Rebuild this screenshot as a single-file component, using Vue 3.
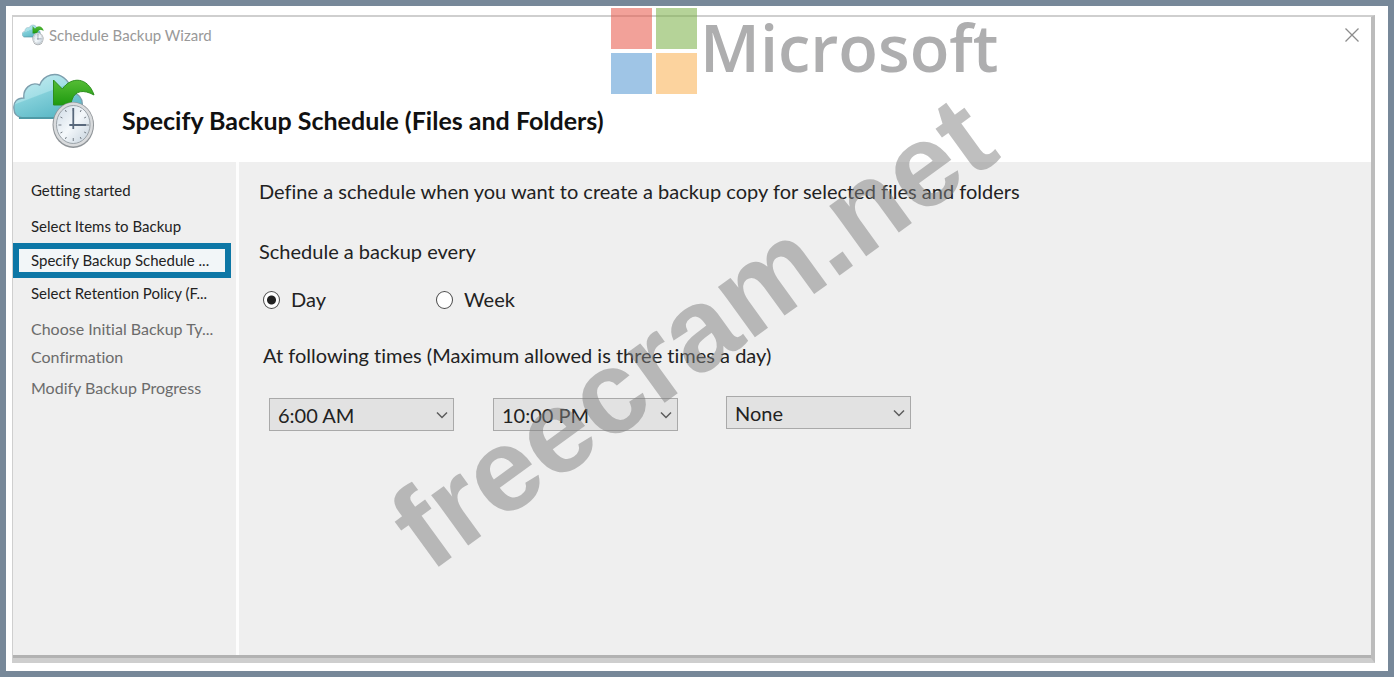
<script setup>
import { ref } from 'vue'

const steps = [
  { label: 'Getting started', state: 'done' },
  { label: 'Select Items to Backup', state: 'done' },
  { label: 'Specify Backup Schedule ...', state: 'current' },
  { label: 'Select Retention Policy (F...', state: 'done' },
  { label: 'Choose Initial Backup Ty...', state: 'pending' },
  { label: 'Confirmation', state: 'pending' },
  { label: 'Modify Backup Progress', state: 'pending' },
]

const frequency = ref('Day')
const options = ['None', '6:00 AM', '10:00 PM']
const times = ref(['6:00 AM', '10:00 PM', 'None'])
</script>

<template>
  <div class="page">
    <svg class="defs" width="0" height="0" aria-hidden="true">
      <defs>
        <linearGradient id="cloudFill" x1="0" y1="0" x2="0.6" y2="1">
          <stop offset="0" stop-color="#c9edf2" />
          <stop offset="0.5" stop-color="#a3dfe6" />
          <stop offset="0.52" stop-color="#82cfd9" />
          <stop offset="1" stop-color="#5bb8c6" />
        </linearGradient>
        <linearGradient id="arrowFill" x1="0" y1="0" x2="0" y2="1">
          <stop offset="0" stop-color="#55bd35" />
          <stop offset="1" stop-color="#1f9a10" />
        </linearGradient>
        <linearGradient id="dialFill" x1="0" y1="0" x2="1" y2="1">
          <stop offset="0" stop-color="#cfdbe6" />
          <stop offset="0.5" stop-color="#f4f8fb" />
          <stop offset="1" stop-color="#c3d0db" />
        </linearGradient>
        <symbol id="backupIcon" viewBox="0 0 84 80" preserveAspectRatio="none">
          <path d="M10 47C4 46 1 43 1 38C0 31 4 27 11 27C10 18 18 10 27 14C31 4 44 -1 54 9C58 13 58 18 58 21C66 22 71 27 70 35C70 43 64 47 58 47Z" fill="url(#cloudFill)" stroke="#7d9fae" stroke-width="1.4" />
          <path d="M6 47H58" stroke="#4f9aa6" stroke-width="2" />
          <path d="M41 9L50 18C59 5 76 6 82 24C71 18 63 20 60 28L58 34H41Z" fill="url(#arrowFill)" stroke="#2b8d1c" stroke-width="1" />
          <ellipse cx="61" cy="54" rx="21" ry="23" fill="#8f9498" />
          <ellipse cx="61" cy="53.500" rx="20" ry="22" fill="#d9dbdd" />
          <ellipse cx="61" cy="53.500" rx="17" ry="19" fill="url(#dialFill)" stroke="#9aa2a8" stroke-width="1" />
          <path d="M61 37v3M61 67v3M46 54h3M74 54h3M53 39l1 2M69 39l-1 2M53 68l1-2M69 68l-1-2M48 46l2 1M74 46l-2 1M48 62l2-1M74 62l-2-1" stroke="#777f87" stroke-width="1" />
          <path d="M61 37V58M57 54H74" stroke="#59697c" stroke-width="1.8" fill="none" />
        </symbol>
      </defs>
    </svg>

    <main class="window">
      <header class="head">
        <div class="titlebar">
          <svg class="app-icon" aria-hidden="true"><use href="#backupIcon" /></svg>
          <span class="app-title">Schedule Backup Wizard</span>
          <button class="close" type="button" aria-label="Close">
            <svg viewBox="0 0 14 14" width="14" height="14"><path d="M0.500 0.500L13.500 13.500M13.500 0.500L0.500 13.500" stroke="#8c8c8c" stroke-width="1.300" /></svg>
          </button>
        </div>
        <div class="banner">
          <svg class="banner-icon" aria-hidden="true"><use href="#backupIcon" /></svg>
          <h1>Specify Backup Schedule (Files and Folders)</h1>
        </div>
      </header>

      <div class="body">
        <nav class="sidebar" aria-label="Wizard steps">
          <ol>
            <li v-for="s in steps" :key="s.label" :class="s.state">{{ s.label }}</li>
          </ol>
        </nav>

        <form class="content" @submit.prevent>
          <p class="intro">Define a schedule when you want to create a backup copy for selected files and folders</p>
          <p id="every" class="every">Schedule a backup every</p>
          <div class="radios" role="radiogroup" aria-labelledby="every">
            <label v-for="f in ['Day', 'Week']" :key="f">
              <input v-model="frequency" type="radio" name="frequency" :value="f" />
              <span>{{ f }}</span>
            </label>
          </div>
          <p class="caption">At following times (Maximum allowed is three times a day)</p>
          <div class="times">
            <div v-for="(t, i) in times" :key="i" class="picker">
              <select v-model="times[i]" :aria-label="'Backup time ' + (i + 1)">
                <option v-for="o in options" :key="o">{{ o }}</option>
              </select>
              <svg class="chevron" viewBox="0 0 12 8" aria-hidden="true"><path d="M1 1.500L6 6.500L11 1.500" fill="none" stroke="#5c5c5c" stroke-width="1.500" /></svg>
            </div>
          </div>
        </form>
      </div>
    </main>

    <div class="brand">
      <svg viewBox="0 0 86 86" width="86" height="86" aria-hidden="true">
        <path d="M0 0h41v41H0z" fill="#e8594b" />
        <path d="M45 0h41v41H45z" fill="#7db249" />
        <path d="M0 45h41v41H0z" fill="#5598d4" />
        <path d="M45 45h41v41H45z" fill="#fbb254" />
      </svg>
      <span>Microsoft</span>
    </div>
    <div class="watermark"><span>freecram.net</span></div>
  </div>
</template>

<style>
html,
body,
#app {
  height: 100%;
}
</style>

<style scoped>
* {
  box-sizing: border-box;
}
.page {
  position: relative;
  display: flex;
  min-height: 100%;
  padding: 9px 13px 8px 6px;
  border: 6px solid #778899;
  background: #fff;
  overflow: hidden;
  font-family: Lato, "Open Sans", sans-serif;
  font-variant-ligatures: none;
  color: #222;
}
.defs {
  position: absolute;
}
.window {
  flex: 1;
  display: flex;
  flex-direction: column;
  border-top: 2px solid #cfcfcf;
  border-left: 1px solid #cfcfcf;
  border-right: 4px solid #bcbcbc;
  border-bottom: 5px solid #cecece;
}
.head {
  height: 145px;
  background: #fff;
}
.titlebar {
  display: flex;
  align-items: center;
  height: 36px;
  padding: 0 12px 0 9px;
}
.app-icon {
  width: 22px;
  height: 22px;
}
.app-title {
  margin-left: 5px;
  font-size: 15px;
  color: #999;
}
.close {
  display: grid;
  margin-left: auto;
  padding: 0;
  border: 0;
  background: none;
}
.banner {
  display: flex;
  align-items: center;
  height: 84px;
  margin-top: 16px;
}
.banner-icon {
  width: 83px;
  height: 80px;
}
h1 {
  margin: 18px 0 0 26px;
  font-size: 25px;
  line-height: 32px;
  font-weight: 700;
  color: #111;
}
.body {
  flex: 1;
  display: flex;
  border-bottom: 3px solid #b2b2b2;
  background: #efefef;
}
.sidebar {
  width: 226px;
  border-right: 3px solid #fdfdfd;
}
ol {
  margin: 0;
  padding: 16px 5px 0 0;
  list-style: none;
  font-size: 15px;
  line-height: 24px;
}
li {
  padding-left: 18px;
  margin-bottom: 12px;
  white-space: nowrap;
}
li:nth-child(2) {
  margin-bottom: 5px;
}
li:nth-child(3) {
  margin-bottom: 3px;
}
li:nth-child(5) {
  margin-bottom: 4px;
}
li:nth-child(6) {
  margin-bottom: 7px;
}
.current {
  padding-left: 12px;
  border: 6px solid #0d77a6;
  line-height: 23px;
  background: #f2f6f8;
}
.pending {
  font-size: 16px;
  color: #6b6b6b;
}
.content {
  flex: 1;
  padding: 14px 20px 0;
  font-size: 20px;
  line-height: 30px;
}
p {
  margin: 0;
}
.every {
  margin-top: 30px;
}
.radios {
  display: flex;
  margin: 18px 0 26px 4px;
}
.radios label {
  display: flex;
  align-items: center;
  gap: 11px;
  width: 173px;
}
input {
  appearance: none;
  width: 17px;
  height: 18px;
  margin: 2px 0 0;
  border: 1px solid #4a4a4a;
  border-radius: 50%;
  background: #fff;
}
input:checked {
  background: radial-gradient(circle, #222 0 4px, #fff 5px);
}
.caption {
  padding-left: 4px;
}
.times {
  display: flex;
  align-items: flex-start;
  padding: 26px 0 0 10px;
}
.picker {
  position: relative;
  width: 185px;
  margin: 2px 39px 0 0;
}
.picker:nth-child(2) {
  margin-right: 48px;
}
.picker:nth-child(3) {
  margin-top: 0;
}
select {
  appearance: none;
  display: block;
  width: 100%;
  height: 33px;
  padding: 0 8px;
  border: 1px solid #a9a9a9;
  border-radius: 0;
  background: #e2e2e2;
  font: inherit;
  color: #222;
}
.chevron {
  position: absolute;
  right: 6px;
  top: 13px;
  width: 12px;
  height: 8px;
  pointer-events: none;
}
.brand {
  position: absolute;
  top: 2px;
  left: 605px;
  display: flex;
  align-items: center;
  opacity: 0.560;
  pointer-events: none;
}
.brand span {
  margin: -8px 0 0 3px;
  font: 600 65px/86px "Open Sans", sans-serif;
  color: #6f6f72;
}
.watermark {
  position: absolute;
  inset: 0;
  display: grid;
  place-items: center;
  padding: 0 10px 14px 0;
  font: 700 118px/136px "Liberation Sans", Arial, sans-serif;
  color: rgba(128, 128, 128, 0.500);
  pointer-events: none;
}
.watermark span {
  transform: rotate(-36deg);
}
</style>
